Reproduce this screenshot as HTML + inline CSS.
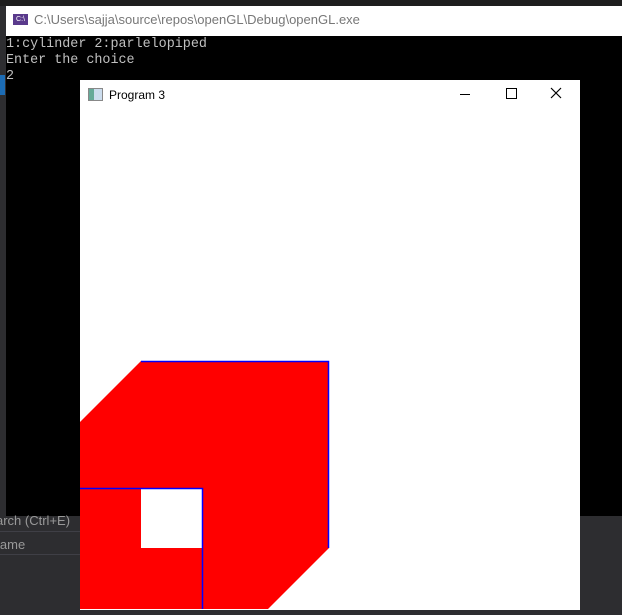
<!DOCTYPE html>
<html><head><meta charset="utf-8"><style>
html,body{margin:0;padding:0;width:622px;height:615px;overflow:hidden;background:#2d2d30;position:relative;font-family:"Liberation Sans",sans-serif}
.a{position:absolute}
</style></head><body>
<div class="a" style="left:0;top:0;width:622px;height:6px;background:#1e1e1e"></div>
<div class="a" style="left:0;top:6px;width:6px;height:510px;background:#2d2d30"></div>
<div class="a" style="left:0;top:75px;width:5px;height:20px;background:#1c6cb5"></div>
<div class="a" style="left:6px;top:6px;width:616px;height:30px;background:#fff"></div>
<div class="a" style="left:13px;top:14px;width:15px;height:11px;background:#5a3a8c;color:#fff;font-size:7px;line-height:11px;text-align:center">C:\</div>
<div class="a" style="left:34px;top:12px;font-size:13px;color:#777;line-height:16px">C:\Users\sajja\source\repos\openGL\Debug\openGL.exe</div>
<div class="a" style="left:6px;top:36px;width:616px;height:480px;background:#000"></div>
<div class="a" style="left:6px;top:37px;font-family:'Liberation Mono',monospace;font-size:13.4px;line-height:16px;color:#c0c0c0;white-space:pre">1:cylinder 2:parlelopiped
Enter the choice
2</div>
<div class="a" style="left:0;top:516px;width:80px;height:99px;background:#2d2d30"></div>
<div class="a" style="left:0;top:531px;width:80px;height:1px;background:#3f3f46"></div>
<div class="a" style="left:-4px;top:513px;font-size:13px;color:#999;line-height:16px">arch (Ctrl+E)</div>
<div class="a" style="left:-3px;top:537px;font-size:13px;color:#999;line-height:16px">lame</div>
<div class="a" style="left:0;top:554px;width:80px;height:1px;background:#3f3f46"></div>
<div class="a" style="left:80px;top:80px;width:500px;height:530px;background:#fff"></div>
<div class="a" style="left:88px;top:88px;width:13px;height:11px;border:1px solid #888;background:linear-gradient(90deg,#6a9 0 40%,#cde 40%)"></div>
<div class="a" style="left:109px;top:87px;font-size:12px;color:#000;line-height:16px">Program 3</div>
<div class="a" style="left:460px;top:94px;width:10px;height:1px;background:#000"></div>
<div class="a" style="left:506px;top:88px;width:9px;height:9px;border:1px solid #000"></div>
<svg class="a" style="left:550px;top:87px" width="12" height="12"><path d="M1 1L11 11M11 1L1 11" stroke="#000" stroke-width="1.2"/></svg>
<svg class="a" style="left:0;top:0" width="622" height="615">
<polygon points="80,422 141,361 329,361 329,548 268,609 80,609" fill="#f00"/>
<rect x="141" y="489" width="61" height="59" fill="#fff"/>
<path d="M141,361.5H328.5V548M80,488.5H202.5V609" stroke="#00f" stroke-width="1.5" fill="none"/>
</svg>
</body></html>
